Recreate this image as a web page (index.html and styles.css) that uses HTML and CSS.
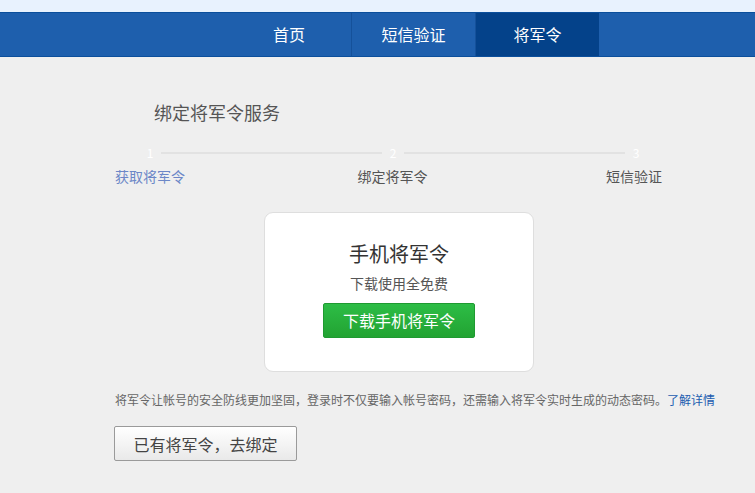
FILE: index.html
```html
<!DOCTYPE html>
<html lang="zh-CN">
<head>
    <meta charset="UTF-8">
    <meta name="viewport" content="width=device-width, initial-scale=1.0">
    <title>绑定将军令服务</title>
    <link rel="stylesheet" href="styles.css">
</head>
<body>
    <div class="topbar"></div>
    <div class="navbar">
        <a class="nav-item" href="#">首页</a>
        <a class="nav-item" href="#">短信验证</a>
        <a class="nav-item active" href="#">将军令</a>
    </div>
    <div class="container">
        <h2 class="title">绑定将军令服务</h2>

        <div class="step-track">
            <span class="num">1</span>
            <span class="line"></span>
            <span class="num">2</span>
            <span class="line"></span>
            <span class="num">3</span>
        </div>
        <div class="step-labels">
            <span class="current">获取将军令</span>
            <span class="middle">绑定将军令</span>
            <span>短信验证</span>
        </div>

        <div class="card">
            <h3>手机将军令</h3>
            <p>下载使用全免费</p>
            <a class="btn-green" href="#">下载手机将军令</a>
        </div>

        <p class="desc">将军令让帐号的安全防线更加坚固，登录时不仅要输入帐号密码，还需输入将军令实时生成的动态密码。<a href="#">了解详情</a></p>

        <button class="btn-gray">已有将军令，去绑定</button>
    </div>
</body>
</html>
```

FILE: styles.css
```css
body {
    margin: 0;
    padding: 0;
    background: #efefef;
    font-family: "Noto Sans CJK SC", "Liberation Sans", sans-serif;
    color: #555;
}
.topbar {
    height: 12px;
    background: #e8f2fe;
}
.navbar {
    height: 43px;
    background: #1e5fad;
    border-top: 1px solid #0b4f9c;
    border-bottom: 1px solid #0b4f9c;
    display: flex;
    padding-left: 227px;
}
.nav-item {
    width: 123px;
    line-height: 43px;
    text-align: center;
    color: #fff;
    font-size: 16px;
    text-decoration: none;
    border-left: 1px solid #15519a;
}
.nav-item:first-child {
    border-left: none;
    width: 124px;
}
.nav-item.active {
    background: #04428a;
}
.container {
    padding-left: 115px;
}
.title {
    margin: 0;
    padding: 41px 0 0 39px;
    height: 29px;
    font-size: 18px;
    font-weight: normal;
    line-height: 29px;
    color: #555;
}
.step-track {
    display: flex;
    align-items: center;
    margin: 18px 0 0 31px;
    width: 494px;
    gap: 7px;
    height: 16px;
}
.step-track .num {
    width: 8px;
    font-size: 12px;
    color: #fff;
    text-align: center;
    line-height: 16px;
}
.step-track .line {
    flex: 1;
    height: 2px;
    background: #e2e2e2;
}
.step-labels {
    display: flex;
    justify-content: space-between;
    width: 547px;
    margin-top: 4px;
    font-size: 14px;
    line-height: 22px;
}
.step-labels .current {
    color: #6c87c7;
}
.step-labels .middle {
    margin-right: 6px;
}
.card {
    margin: 25px 0 0 149px;
    width: 268px;
    height: 158px;
    background: #fff;
    border: 1px solid #dedede;
    border-radius: 9px;
    text-align: center;
    box-sizing: content-box;
}
.card h3 {
    margin: 28px 0 0;
    font-size: 20px;
    font-weight: normal;
    line-height: 26px;
    color: #333;
}
.card p {
    margin: 6px 0 0;
    font-size: 14px;
    line-height: 20px;
    color: #555;
}
.btn-green {
    display: block;
    width: 150px;
    height: 33px;
    line-height: 33px;
    margin: 10px auto 0;
    background: linear-gradient(#2dbd46, #22a332);
    border: 1px solid #1f9a31;
    border-radius: 2px;
    color: #fff;
    font-size: 16px;
    text-decoration: none;
}
.desc {
    margin: 19px 0 0;
    font-size: 12px;
    line-height: 18px;
    color: #666;
}
.desc a {
    color: #1c5db0;
    text-decoration: none;
}
.btn-gray {
    display: block;
    margin-top: 17px;
    margin-left: -1px;
    width: 183px;
    height: 35px;
    background: linear-gradient(#fff, #e9e9e9);
    border: 1px solid #9a9a9a;
    border-radius: 2px;
    font-family: inherit;
    font-size: 16px;
    color: #444;
    padding: 0;
}
```
